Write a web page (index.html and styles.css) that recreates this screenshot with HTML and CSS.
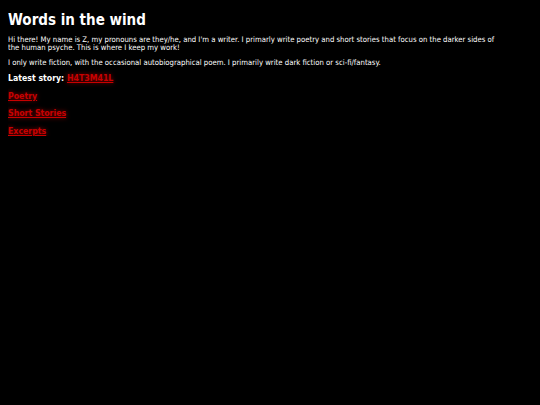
FILE: index.html
```html
<!DOCTYPE html>
<html>
<head>
<meta charset="utf-8">
<link rel="stylesheet" href="styles.css">
</head>
<body>
<h1 class="title">Words in the wind</h1>
<p class="text">Hi there! My name is Z, my pronouns are they/he, and I'm a writer. I primarly write poetry and short stories that focus on the darker sides of the human psyche. This is where I keep my work!</p>
<p class="text">I only write fiction, with the occasional autobiographical poem. I primarily write dark fiction or sci-fi/fantasy.</p>
<h3 class="nav">Latest story: <a href="#">H4T3M41L</a></h3>
<h3 class="nav"><a href="#">Poetry</a></h3>
<h3 class="nav"><a href="#">Short Stories</a></h3>
<h3 class="nav"><a href="#">Excerpts</a></h3>
</body>
</html>
```
FILE: styles.css
```css
html, body {
  background: #000;
}
body {
  margin: 8px;
  color: #fff;
  font-family: "DejaVu Sans Condensed", "DejaVu Sans", Verdana, sans-serif;
  font-stretch: condensed;
  font-size: 7.7px;
  max-width: 492px;
}
.title {
  font-size: 15px;
  font-weight: bold;
  margin: 3px 0 7px;
  line-height: 18px;
}
.text {
  margin: 0 0 7.5px;
  line-height: 7.5px;
}
.nav {
  font-size: 8.7px;
  font-weight: bold;
  margin: 8px 0 0;
  line-height: 9.5px;
}
.nav a {
  color: #c80000;
  text-decoration: underline;
  text-shadow: 0 0 4px #a00000;
}
```
